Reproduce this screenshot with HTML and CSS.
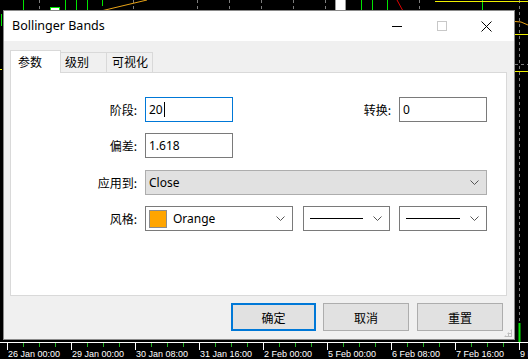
FILE: index.html
```html
<!DOCTYPE html>
<html lang="zh">
<head>
<meta charset="utf-8">
<title>Bollinger Bands</title>
<link rel="stylesheet" href="styles.css">
</head>
<body>
<svg class="chart" width="528" height="359" viewBox="0 0 528 359">
  <g stroke="#7d7d7d" stroke-dasharray="3 3" fill="none">
    <line x1="39.5" y1="0" x2="39.5" y2="10"/>
    <line x1="133.5" y1="0" x2="133.5" y2="10"/>
    <line x1="197.5" y1="0" x2="197.5" y2="10"/>
    <line x1="229.5" y1="0" x2="229.5" y2="10"/>
    <line x1="261.5" y1="0" x2="261.5" y2="10"/>
    <line x1="293.5" y1="0" x2="293.5" y2="10"/>
    <line x1="325.5" y1="0" x2="325.5" y2="10"/>
    <line x1="419.5" y1="0" x2="419.5" y2="10"/>
    <line x1="519.5" y1="0" x2="519.5" y2="322"/>
    <line x1="515" y1="64.5" x2="528" y2="64.5"/>
  </g>
  <g stroke="#00e600" fill="none">
    <line x1="23.5" y1="0" x2="23.5" y2="10"/>
    <line x1="65.5" y1="0" x2="65.5" y2="10"/>
    <line x1="76.5" y1="0" x2="76.5" y2="10"/>
    <line x1="87.5" y1="0" x2="87.5" y2="10"/>
    <line x1="102.5" y1="0" x2="102.5" y2="6"/>
    <line x1="361.5" y1="0" x2="361.5" y2="10"/>
    <line x1="372.5" y1="0" x2="372.5" y2="10"/>
    <line x1="387.5" y1="0" x2="387.5" y2="10"/>
    <line x1="482.5" y1="0" x2="482.5" y2="10"/>
    <line x1="1.5" y1="14" x2="1.5" y2="26"/>
    <rect x="50.5" y="7.5" width="9" height="4" fill="#fff"/>
    <line x1="519.5" y1="323" x2="519.5" y2="343" stroke-width="2"/>
  </g>
  <rect x="335.5" y="-1" width="10" height="12" fill="#fff" stroke="#9a9a9a"/>
  <polyline points="35,10.5 103,10.5 147,0" stroke="#e8a317" fill="none"/>
  <polyline points="515,21.5 521,22 528,25" stroke="#e8a317" fill="none"/>
  <line x1="397" y1="0" x2="403" y2="11" stroke="#e00000"/>
  <g stroke="#f0f000" fill="none">
    <line x1="435" y1="1.5" x2="528" y2="1.5"/>
    <line x1="515" y1="34.5" x2="528" y2="34.5"/>
    <line x1="515" y1="71.5" x2="528" y2="71.5"/>
    <line x1="0" y1="69.5" x2="2" y2="69.5"/>
  </g>
  <line x1="0" y1="342.5" x2="528" y2="342.5" stroke="#fff"/>
  <g stroke="#22b022">
    <line x1="23.5" y1="343" x2="23.5" y2="347"/><line x1="39.5" y1="343" x2="39.5" y2="347"/><line x1="55.5" y1="343" x2="55.5" y2="347"/>
    <line x1="87.5" y1="343" x2="87.5" y2="347"/><line x1="103.5" y1="343" x2="103.5" y2="347"/><line x1="119.5" y1="343" x2="119.5" y2="347"/>
    <line x1="151.5" y1="343" x2="151.5" y2="347"/><line x1="167.5" y1="343" x2="167.5" y2="347"/><line x1="183.5" y1="343" x2="183.5" y2="347"/>
    <line x1="215.5" y1="343" x2="215.5" y2="347"/><line x1="231.5" y1="343" x2="231.5" y2="347"/><line x1="247.5" y1="343" x2="247.5" y2="347"/>
    <line x1="279.5" y1="343" x2="279.5" y2="347"/><line x1="295.5" y1="343" x2="295.5" y2="347"/><line x1="311.5" y1="343" x2="311.5" y2="347"/>
    <line x1="343.5" y1="343" x2="343.5" y2="347"/><line x1="359.5" y1="343" x2="359.5" y2="347"/><line x1="375.5" y1="343" x2="375.5" y2="347"/>
    <line x1="407.5" y1="343" x2="407.5" y2="347"/><line x1="423.5" y1="343" x2="423.5" y2="347"/><line x1="439.5" y1="343" x2="439.5" y2="347"/>
    <line x1="471.5" y1="343" x2="471.5" y2="347"/><line x1="487.5" y1="343" x2="487.5" y2="347"/><line x1="503.5" y1="343" x2="503.5" y2="347"/>
  </g>
  <g stroke="#fff">
    <line x1="7.5" y1="343" x2="7.5" y2="350"/><line x1="71.5" y1="343" x2="71.5" y2="350"/><line x1="135.5" y1="343" x2="135.5" y2="350"/>
    <line x1="199.5" y1="343" x2="199.5" y2="350"/><line x1="263.5" y1="343" x2="263.5" y2="350"/><line x1="327.5" y1="343" x2="327.5" y2="350"/>
    <line x1="391.5" y1="343" x2="391.5" y2="350"/><line x1="455.5" y1="343" x2="455.5" y2="350"/><line x1="519.5" y1="343" x2="519.5" y2="350"/>
  </g>
  <g class="axis-labels" fill="#fff">
    <text x="8" y="357">26 Jan 00:00</text>
    <text x="72" y="357">29 Jan 00:00</text>
    <text x="136" y="357">30 Jan 08:00</text>
    <text x="200" y="357">31 Jan 16:00</text>
    <text x="264" y="357">2 Feb 00:00</text>
    <text x="328" y="357">5 Feb 00:00</text>
    <text x="392" y="357">6 Feb 08:00</text>
    <text x="456" y="357">7 Feb 16:00</text>
    <text x="520" y="357">9 Feb 00:00</text>
  </g>
</svg>

<div class="window">
  <div class="titlebar">
    <span class="title">Bollinger Bands</span>
    <div class="caption">
      <span class="cap"><svg width="10" height="10" viewBox="0 0 10 10"><line x1="0" y1="5.5" x2="10" y2="5.5" stroke="#000"/></svg></span>
      <span class="cap"><svg width="10" height="10" viewBox="0 0 10 10"><rect x="0.5" y="0.5" width="9" height="9" fill="none" stroke="#c8c8c8"/></svg></span>
      <span class="cap"><svg width="11" height="11" viewBox="0 0 11 11"><path d="M0.5 0.5 L10.5 10.5 M10.5 0.5 L0.5 10.5" stroke="#000" fill="none"/></svg></span>
    </div>
  </div>
  <div class="content">
    <div class="tabs">
      <div class="tab active">参数</div>
      <div class="tab t2">级别</div>
      <div class="tab t3">可视化</div>
    </div>
    <div class="panel">
      <div class="row">
        <label class="lbl">阶段:</label>
        <div class="field focus w88"><span>20</span><span class="caret"></span></div>
        <div class="spacer"></div>
        <label class="lbl2">转换:</label>
        <div class="field w88"><span>0</span></div>
      </div>
      <div class="row r2">
        <label class="lbl">偏差:</label>
        <div class="field w88"><span>1.618</span></div>
      </div>
      <div class="row r3">
        <label class="lbl">应用到:</label>
        <div class="combo grey wfull"><span class="val">Close</span>
          <svg class="chev" width="9" height="5" viewBox="0 0 9 5"><path d="M0.5 0.5 L4.5 4.5 L8.5 0.5" stroke="#555" fill="none"/></svg></div>
      </div>
      <div class="row r4">
        <label class="lbl">风格:</label>
        <div class="combo wcolor"><span class="swatch"></span><span class="val">Orange</span>
          <svg class="chev" width="9" height="5" viewBox="0 0 9 5"><path d="M0.5 0.5 L4.5 4.5 L8.5 0.5" stroke="#555" fill="none"/></svg></div>
        <div class="combo wline a"><span class="line"></span>
          <svg class="chev" width="9" height="5" viewBox="0 0 9 5"><path d="M0.5 0.5 L4.5 4.5 L8.5 0.5" stroke="#555" fill="none"/></svg></div>
        <div class="combo wline b"><span class="line"></span>
          <svg class="chev" width="9" height="5" viewBox="0 0 9 5"><path d="M0.5 0.5 L4.5 4.5 L8.5 0.5" stroke="#555" fill="none"/></svg></div>
      </div>
    </div>
    <div class="buttons">
      <button class="btn default">确定</button>
      <button class="btn">取消</button>
      <button class="btn">重置</button>
    </div>
    <span class="grip"></span>
  </div>
</div>
</body>
</html>
```

FILE: styles.css
```css
* { box-sizing: border-box; }
html, body { margin: 0; padding: 0; }
body {
  width: 528px;
  height: 359px;
  overflow: hidden;
  position: relative;
  background: #000;
  font-family: "Noto Sans", "Noto Sans CJK SC", sans-serif;
  font-size: 12px;
  color: #000;
}
.chart { position: absolute; left: 0; top: 0; }
.axis-labels { font-family: "Liberation Sans", sans-serif; font-size: 9px; }

.window {
  position: absolute;
  left: 3px;
  top: 10px;
  width: 512px;
  height: 330px;
  border: 1px solid #8a8a8a;
  background: #f0f0f0;
  display: flex;
  flex-direction: column;
}
.titlebar {
  height: 30px;
  background: #fff;
  display: flex;
  align-items: center;
  padding-left: 8px;
  flex: none;
}
.title {
  font-family: "Noto Sans", sans-serif;
  font-size: 12.5px;
  flex: 1;
  margin-top: -1px;
}
.caption { display: flex; height: 100%; margin-right: 5px; }
.cap { width: 45px; display: flex; align-items: center; justify-content: center; }

.content {
  flex: 1;
  position: relative;
  padding: 9px 7px 0 6px;
  display: flex;
  flex-direction: column;
}
.tabs {
  display: flex;
  align-items: flex-end;
  height: 23px;
  margin-bottom: -1px;
  position: relative;
  z-index: 1;
  font-family: "Noto Sans CJK SC", sans-serif;
}
.tab {
  height: 20px;
  margin-bottom: 1px;
  border: 1px solid #d9d9d9;
  border-bottom: none;
  background: #f0f0f0;
  line-height: 18px;
  padding-left: 5px;
}
.tab.active {
  height: 23px;
  margin-bottom: 0;
  width: 51px;
  background: #fff;
  padding-left: 7px;
  line-height: 21px;
}
.tab.t2 { width: 46px; border-left: none; padding-left: 4px; }
.tab.t3 { width: 46px; border-left: none; padding-left: 5px; }

.panel {
  height: 224px;
  background: #fff;
  border: 1px solid #d9d9d9;
  padding: 24px 19px 0 0;
  display: flex;
  flex-direction: column;
}
.row { display: flex; align-items: center; height: 25px; }
.r2 { margin-top: 11px; }
.r3 { margin-top: 12px; }
.r4 { margin-top: 11px; }
.lbl, .lbl2 {
  font-family: "Noto Sans CJK SC", sans-serif;
  text-align: right;
  margin-right: 8px;
}
.lbl { width: 126px; }
.spacer { flex: 1; }

.field {
  height: 25px;
  border: 1px solid #7a7a7a;
  background: #fff;
  display: flex;
  align-items: center;
  padding-left: 3px;
  padding-bottom: 1px;
}
.field.focus { border-color: #0078d7; }
.w88 { width: 88px; }
.caret { width: 1px; height: 15px; background: #000; margin-left: 1px; }

.combo {
  height: 25px;
  border: 1px solid #7a7a7a;
  background: #fff;
  display: flex;
  align-items: center;
  padding: 0 7px 0 3px;
}
.combo.grey { background: #e1e1e1; border-color: #adadad; }
.combo .val { flex: 1; padding-bottom: 1px; }
.wfull { flex: 1; }
.wcolor { width: 148px; }
.wline { width: 87px; padding-left: 6px; }
.wline.a { margin-left: 10px; }
.wline.b { margin-left: 9px; width: 88px; }
.swatch {
  width: 18px;
  height: 18px;
  background: #ffa500;
  border: 1px solid #8c8c8c;
  margin-right: 6px;
}
.line { flex: 1; height: 1px; background: #000; margin-right: 10px; }
.chev { flex: none; }

.buttons {
  display: flex;
  justify-content: flex-end;
  gap: 7px;
  margin-top: 7px;
  padding-right: 4px;
}
.btn {
  width: 86px;
  height: 28px;
  border: 1px solid #adadad;
  background: #e1e1e1;
  font-family: "Noto Sans CJK SC", sans-serif;
  font-size: 12px;
  color: #000;
  padding: 0;
}
.btn + .btn + .btn { margin-left: 1px; }
.btn.default { border: 2px solid #0078d7; width: 85px; }
.grip {
  position: absolute;
  right: 2px;
  bottom: 2px;
  width: 8px;
  height: 8px;
  background:
    radial-gradient(circle, #bdbdbd 1px, transparent 1.2px) 0 0 / 3px 3px;
  clip-path: polygon(100% 0, 100% 100%, 0 100%);
}
```
